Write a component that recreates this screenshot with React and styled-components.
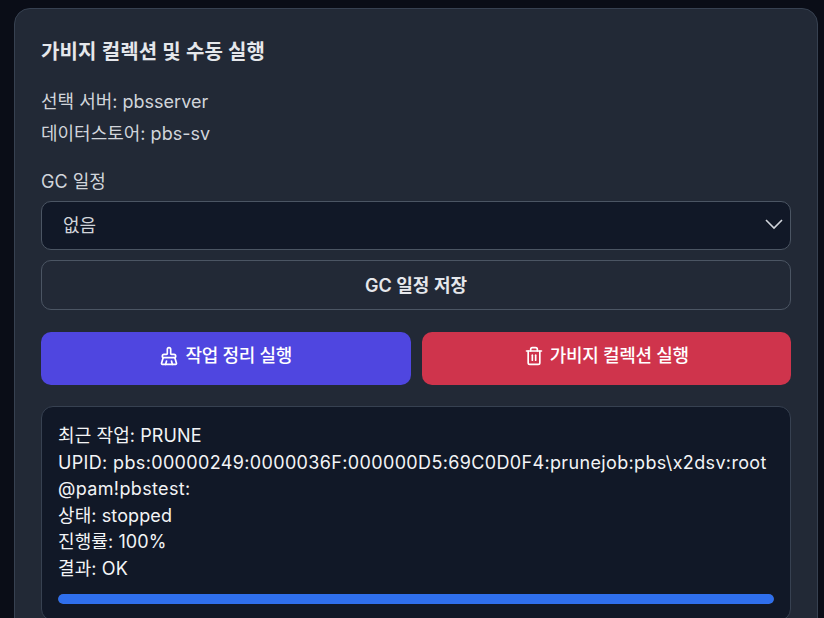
import styled, {createGlobalStyle} from "styled-components";
import {BrushCleaning, Trash2} from "lucide-react";

const Global = createGlobalStyle`
html, body {
    margin: 0;
    height: 100%;
    overflow: hidden;
    background: #0a0d17;
    font-family: Inter, "Noto Sans CJK KR", sans-serif;
}
`;
const Page = styled.div`
height: 100vh;
box-sizing: border-box;
overflow: hidden;
padding: 8px 6px 0 14px;
`;
const Card = styled.section`
background: #222936;
border: 1px solid #374151;
border-radius: 16px;
padding: 28px 26px 26px;
`;
const Title = styled.h2`
margin: 0 0 23px;
font-size: 20px;
line-height: 30px;
font-weight: 600;
letter-spacing: .1px;
color: #e5e7eb;
`;
const Info = styled.p`
margin: 0 0 8px;
font-size: 18px;
line-height: 24px;
color: #d1d5db;
`;
const Label = styled.label`
display: block;
margin: 24px 0 7px;
font-size: 18px;
line-height: 24px;
color: #d1d5db;
`;
const Select = styled.div`
display: flex;
align-items: center;
justify-content: space-between;
height: 43px;
padding: 0 7px 4px 21px;
background: #111827;
border: 1px solid #4b5563;
border-radius: 10px;
font-size: 18px;
color: #d1d5db;
`;
const SaveButton = styled.button`
display: block;
width: 100%;
height: 50px;
margin-top: 10px;
padding-bottom: 4px;
background: transparent;
border: 1px solid #4b5563;
border-radius: 10px;
font: 600 18px Inter, "Noto Sans CJK KR", sans-serif;
color: #e5e7eb;
`;
const Actions = styled.div`
display: grid;
grid-template-columns: 1fr 1fr;
gap: 11px;
margin-top: 22px;
`;
const ActionButton = styled.button`
display: flex;
align-items: center;
justify-content: center;
gap: 6px;
height: 53px;
padding-bottom: 10px;
background: ${props => props.color};
border: 0;
border-radius: 10px;
font: 500 18px Inter, "Noto Sans CJK KR", sans-serif;
letter-spacing: -.3px;
color: #fff;
svg {
    margin-top: 3px;
}
`;
const LogBox = styled.div`
margin-top: 21px;
padding: 16px;
background: #111827;
border: 1px solid #374151;
border-radius: 12px;
font-size: 18px;
line-height: 26.6px;
color: #f3f4f6;
word-break: break-all;
`;
const Line = styled.div`
letter-spacing: ${props => props.$wide ? '.35px' : '.1px'};
`;
const Track = styled.div`
height: 10px;
margin-top: 11px;
background: #374151;
border-radius: 5px;
overflow: hidden;
`;
const Fill = styled.div`
height: 100%;
background: #2f6fed;
border-radius: 5px;
`;

const lines = [
    '최근 작업: PRUNE',
    'UPID: pbs:00000249:0000036F:000000D5:69C0D0F4:prunejob:pbs\\x2dsv:root@pam!pbstest:',
    '상태: stopped',
    '진행률: 100%',
    '결과: OK',
]

const App = () => {
    const progress = 100
    return (
        <Page>
            <Global/>
            <Card>
                <Title>가비지 컬렉션 및 수동 실행</Title>
                <Info>선택 서버: pbsserver</Info>
                <Info>데이터스토어: pbs-sv</Info>
                <Label>GC 일정</Label>
                <Select>
                    없음
                    <svg width="18" height="18" viewBox="0 0 18 18" fill="none" stroke="#d1d5db" strokeWidth="1.6">
                        <path d="M1 5l8 8 8-8"/>
                    </svg>
                </Select>
                <SaveButton>GC 일정 저장</SaveButton>
                <Actions>
                    <ActionButton color="#4f46e0"><BrushCleaning size={20}/>작업 정리 실행</ActionButton>
                    <ActionButton color="#cf344c"><Trash2 size={20}/>가비지 컬렉션 실행</ActionButton>
                </Actions>
                <LogBox>
                    {lines.map(line => <Line key={line} $wide={line.startsWith('UPID')}>{line}</Line>)}
                    <Track><Fill style={{width: `${progress}%`}}/></Track>
                </LogBox>
            </Card>
        </Page>
    )
};

export default App;
